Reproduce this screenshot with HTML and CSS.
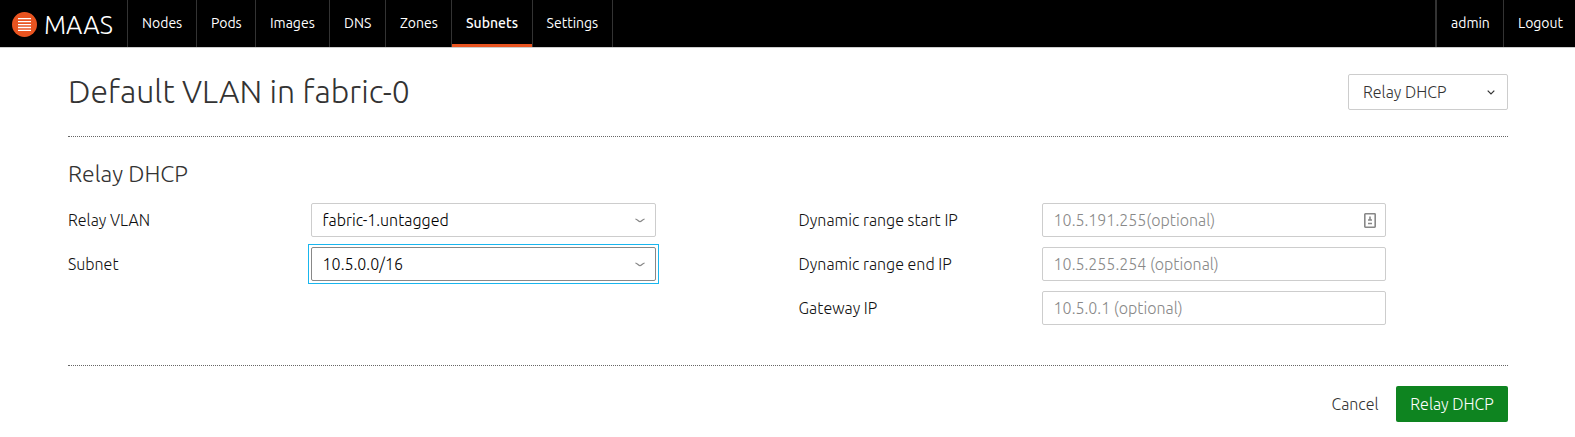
FILE: index.html
```html
<!DOCTYPE html>
<html lang="en">
<head>
<meta charset="utf-8">
<title>MAAS - Default VLAN in fabric-0</title>
<link rel="stylesheet" href="styles.css">
</head>
<body>
<header class="header">
  <a class="logo">
    <svg class="logo-icon" viewBox="0 0 25 25" width="25" height="25"><circle cx="12.5" cy="12.5" r="12.5" fill="#e95420"/><path d="M6 6.700h13M6 9.700h13M6 12.600h13M6 15.500h13M6 18.400h13" stroke="#fff" stroke-width="1.300"/></svg>
    <span class="logo-text">MAAS</span>
  </a>
  <nav class="nav">
    <a class="nav-item nodes">Nodes</a>
    <a class="nav-item pods">Pods</a>
    <a class="nav-item images">Images</a>
    <a class="nav-item dns">DNS</a>
    <a class="nav-item zones">Zones</a>
    <a class="nav-item subnets active">Subnets</a>
    <a class="nav-item settings">Settings</a>
  </nav>
  <nav class="nav user-nav">
    <a class="nav-item admin">admin</a>
    <a class="nav-item logout">Logout</a>
  </nav>
</header>
<main class="page">
  <section class="title-row">
    <h1 class="title">Default VLAN in fabric-0</h1>
    <button class="action-menu">Relay DHCP
      <svg width="8" height="5" viewBox="0 0 8 5"><path d="M.7.7 4 4 7.300.7" fill="none" stroke="#333" stroke-width="1.200"/></svg>
    </button>
  </section>
  <section class="form">
    <h2 class="subtitle">Relay DHCP</h2>
    <div class="columns">
      <div class="column">
        <div class="row"><label class="label">Relay VLAN</label>
          <div class="field">fabric-1.untagged<svg class="chevron" width="10" height="5" viewBox="0 0 10 5"><path d="M.4 1C2.500 1.300 3.500 3.600 5 3.600S7.500 1.300 9.600 1" fill="none" stroke="#888" stroke-width="1.200"/></svg></div></div>
        <div class="row"><label class="label">Subnet</label>
          <div class="field focused">10.5.0.0/16<svg class="chevron" width="10" height="5" viewBox="0 0 10 5"><path d="M.4 1C2.500 1.300 3.500 3.600 5 3.600S7.500 1.300 9.600 1" fill="none" stroke="#888" stroke-width="1.200"/></svg></div></div>
      </div>
      <div class="column column-right">
        <div class="row"><label class="label">Dynamic range start IP</label>
          <div class="field placeholder">10.5.191.255(optional)<svg class="autofill" width="12" height="15" viewBox="0 0 12 15"><rect x=".8" y=".8" width="10.400" height="13.400" rx=".6" fill="#fff" stroke="#888" stroke-width="1.600"/><path d="M6 3.500v3M4 7h4M4 10.500h4" stroke="#888" stroke-width="1.600"/></svg></div></div>
        <div class="row"><label class="label">Dynamic range end IP</label>
          <div class="field placeholder">10.5.255.254 (optional)</div></div>
        <div class="row"><label class="label">Gateway IP</label>
          <div class="field placeholder">10.5.0.1 (optional)</div></div>
      </div>
    </div>
  </section>
  <footer class="actions">
    <a class="cancel">Cancel</a>
    <button class="submit">Relay DHCP</button>
  </footer>
</main>
</body>
</html>
```
FILE: styles.css
```css
* { box-sizing: border-box; }
body { margin: 0; background: #fff; color: #111; font: 300 16px/24px Ubuntu, "Open Sans", sans-serif; }
.header { display: flex; height: 48px; background: #000; border-bottom: 1px solid #cdcdcd; color: #fff; }
.logo { display: flex; width: 127px; padding: 12px 0 0 12px; gap: 7px; }
.logo-text { font-size: 25.5px; line-height: 25px; }
.nav { display: flex; border-right: 1px solid #333; }
.nav-item { border-left: 1px solid #333; padding: 11px 0 0 14px; font-size: 14px; font-weight: 400; }
.nodes { width: 69px; }
.pods { width: 59px; }
.images { width: 74px; }
.dns { width: 56px; }
.zones { width: 66px; }
.subnets { width: 81px; }
.settings { width: 80px; padding-left: 13.6px; }
.active { font-weight: 500; box-shadow: inset 0 -3px #e95420; }
.user-nav { margin-left: auto; border-right: 0; border-left: 1px solid #333; }
.admin { width: 67px; }
.logout { width: 72px; }
.page { width: 1440px; margin-left: 68px; }
.title-row { display: flex; justify-content: space-between; align-items: flex-start; height: 89px; padding-top: 26px; border-bottom: 1px dotted #666; }
.title { margin: 0; font-size: 32px; font-weight: 300; line-height: 34px; color: #333; letter-spacing: 0.02px; }
.action-menu { display: flex; align-items: center; justify-content: space-between; width: 160px; height: 36px; padding: 0 12px 0 14px; border: 1px solid #cdcdcd; border-radius: 2px; background: #fff; color: #333; font: inherit; }
.form { height: 229px; padding-top: 21px; border-bottom: 1px dotted #666; }
.subtitle { margin: 0 0 13px; font-size: 23px; font-weight: 300; line-height: 32px; color: #333; }
.columns { display: flex; gap: 142px; }
.column { display: flex; flex-direction: column; gap: 10px; width: 588px; }
.row { display: flex; height: 34px; align-items: center; }
.label { width: 243px; }
.column-right .label { width: 244px; padding-left: 0.6px; }
.field { position: relative; display: flex; align-items: center; justify-content: space-between; width: 345px; height: 34px; padding: 0 10px 0 10.6px; border: 1px solid #cdcdcd; border-radius: 2px; color: #000; }
.column-right .field { width: 344px; }
.focused { border-color: #888; }
.focused::after { content: ""; position: absolute; inset: -4px; border: 1px solid #19b6ee; }
.placeholder { color: #888; padding-right: 9px; }
.actions { display: flex; justify-content: flex-end; align-items: center; padding-top: 20px; gap: 17.5px; }
.cancel { color: #333; }
.submit { width: 112px; height: 36px; border: 0; border-radius: 2px; background: #0e8420; color: #fff; font: inherit; }
```
